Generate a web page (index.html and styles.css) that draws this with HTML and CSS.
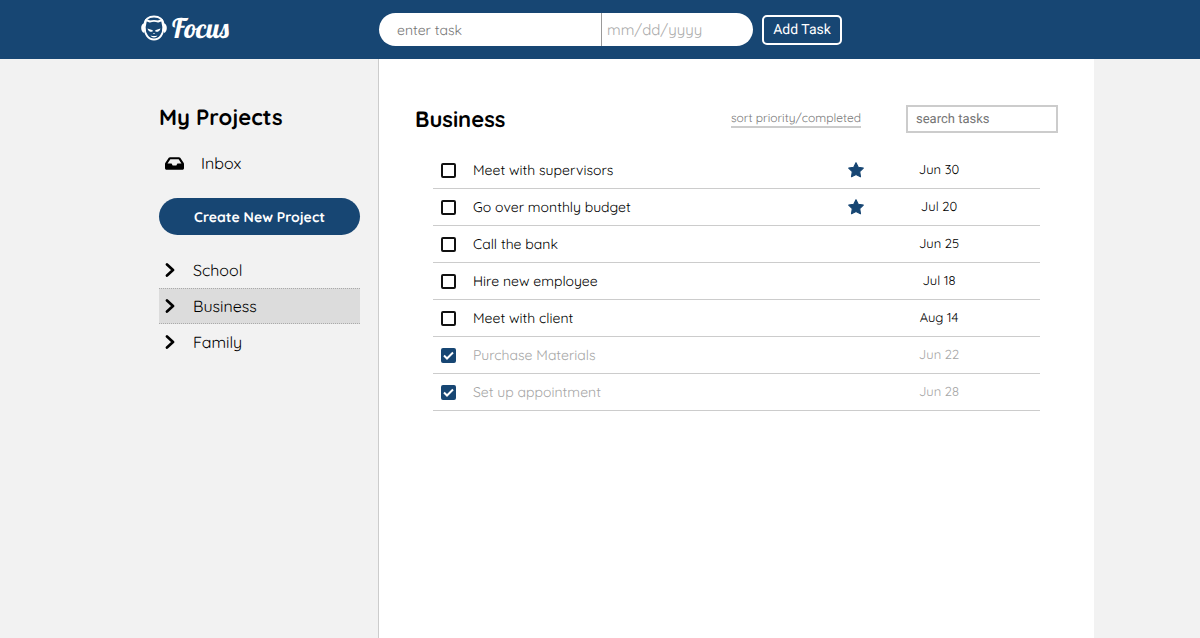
FILE: index.html
```html
<!DOCTYPE html>
<html lang="en">
<head>
<meta charset="utf-8">
<meta name="viewport" content="width=device-width, initial-scale=1">
<title>Focus</title>
<link rel="stylesheet" href="styles.css">
</head>
<body>
<header class="topbar">
  <div class="brand">
    <svg class="brand-icon" viewBox="0 0 26 26" aria-hidden="true">
      <path d="M3.500 10C3.500 4 8 1.500 13 1.500S22.500 4 22.500 10" fill="none" stroke="#fff" stroke-width="1.800"/>
      <path d="M3 8.200C.8 9 .2 11 .2 13s.8 4.200 3 5zM23 8.200c2.200.8 2.800 2.800 2.800 4.800s-.8 4.200-2.800 5z" fill="#fff"/>
      <path d="M5 5l3.800 1.500q4.200-1.300 8.400 0L21 5l1.300 7c.3 7-3.500 12.500-9.300 12.500S3.400 19 3.700 12z" fill="#174673" stroke="#fff" stroke-width="1.900" stroke-linejoin="round"/>
      <path d="M6.500 13.400l5.300 1.900-.4 1.500c-2.600.3-4.300-1-4.900-3.400zM19.500 13.400l-5.300 1.900.4 1.500c2.600.3 4.300-1 4.900-3.400zM11.800 18h2.400L13 19zM9.500 20.500q3.500 1 7 0-1 1.900-3.500 1.900t-3.500-1.900z" fill="#fff"/>
    </svg>
    <span class="brand-name">Focus</span>
  </div>
  <form class="add-form">
    <input class="task-input" type="text" placeholder="enter task" aria-label="Task">
    <input class="date-input" type="text" placeholder="mm/dd/yyyy" aria-label="Due date">
    <button class="add-button" type="button">Add Task</button>
  </form>
</header>
<div class="layout">
  <nav class="sidebar">
    <h2 class="heading">My Projects</h2>
    <a class="inbox" href="#inbox">
      <svg class="inbox-icon" viewBox="0 0 576 512" aria-hidden="true"><path d="M567.938 243.908L462.250 85.374A48.003 48.003 0 0 0 422.311 64H153.689a48 48 0 0 0-39.938 21.374L8.062 243.908A47.994 47.994 0 0 0 0 270.533V400c0 26.510 21.490 48 48 48h480c26.510 0 48-21.490 48-48V270.533a47.994 47.994 0 0 0-8.062-26.625zM162.252 128h251.497l85.333 128H376l-32 64H232l-32-64H76.918l85.334-128z"/></svg>
      Inbox
    </a>
    <button class="create-button" type="button">Create New Project</button>
    <ul class="projects">
      <li><a class="project" href="#school"><svg class="chevron" viewBox="0 0 10 14" aria-hidden="true"><path d="M2 1.500L8 7l-6 5.500"/></svg>School</a></li>
      <li><a class="project selected" href="#business"><svg class="chevron" viewBox="0 0 10 14" aria-hidden="true"><path d="M2 1.500L8 7l-6 5.500"/></svg>Business</a></li>
      <li><a class="project" href="#family"><svg class="chevron" viewBox="0 0 10 14" aria-hidden="true"><path d="M2 1.500L8 7l-6 5.500"/></svg>Family</a></li>
    </ul>
  </nav>
  <main class="content">
    <div class="toolbar">
      <h2 class="heading">Business</h2>
      <button class="sort" type="button">sort priority/completed</button>
      <input class="search" type="text" placeholder="search tasks" aria-label="Search tasks">
    </div>
    <ul class="tasks">
      <li class="task"><input class="check" type="checkbox" id="t1"><label for="t1">Meet with supervisors</label><svg class="star" viewBox="0 0 16 16" role="img" aria-label="Priority"><path d="M8 1.500l2 4.100 4.500.7-3.200 3.200.7 4.500-4-2.100L4 14l.7-4.500-3.200-3.200 4.500-.7z"/></svg><time>Jun 30</time></li>
      <li class="task"><input class="check" type="checkbox" id="t2"><label for="t2">Go over monthly budget</label><svg class="star" viewBox="0 0 16 16" role="img" aria-label="Priority"><path d="M8 1.500l2 4.100 4.500.7-3.200 3.200.7 4.500-4-2.100L4 14l.7-4.500-3.200-3.200 4.500-.7z"/></svg><time>Jul 20</time></li>
      <li class="task"><input class="check" type="checkbox" id="t3"><label for="t3">Call the bank</label><time>Jun 25</time></li>
      <li class="task"><input class="check" type="checkbox" id="t4"><label for="t4">Hire new employee</label><time>Jul 18</time></li>
      <li class="task"><input class="check" type="checkbox" id="t5"><label for="t5">Meet with client</label><time>Aug 14</time></li>
      <li class="task done"><span class="tick"><input class="check" type="checkbox" id="t6" checked><svg viewBox="0 0 15 15" aria-hidden="true"><path d="M3 7.500l3 3 6-6"/></svg></span><label for="t6">Purchase Materials</label><time>Jun 22</time></li>
      <li class="task done"><span class="tick"><input class="check" type="checkbox" id="t7" checked><svg viewBox="0 0 15 15" aria-hidden="true"><path d="M3 7.500l3 3 6-6"/></svg></span><label for="t7">Set up appointment</label><time>Jun 28</time></li>
    </ul>
  </main>
</div>
</body>
</html>
```
FILE: styles.css
```css
:root {
  --navy: #174673;
  --side: 379px;
}

* { box-sizing: border-box; }

body {
  margin: 0;
  min-height: 100vh;
  display: flex;
  flex-direction: column;
  background: #f2f2f2;
  color: #000;
  font-family: Quicksand, Lato, sans-serif;
  font-size: 16px;
  text-rendering: geometricPrecision;
}

input, button { font-family: inherit; margin: 0; text-rendering: inherit; }
button { cursor: pointer; }
a { color: inherit; text-decoration: none; }
ul { list-style: none; margin: 0; padding: 0; }

.topbar {
  display: grid;
  grid-template-columns: var(--side) 1fr;
  align-items: center;
  padding: 13px 0;
  background: var(--navy);
  color: #fff;
}

.brand {
  display: flex;
  align-items: center;
  gap: 5px;
  padding: 0 0 3px 141px;
}
.brand-icon { width: 26px; height: 26px; }
.brand-name {
  font: 27px/28px Lobster, "Liberation Serif", serif;
}

.add-form { display: flex; align-items: center; }
.task-input, .date-input {
  height: 33px;
  border: 0;
  background: #fff;
}
.task-input {
  width: 223px;
  padding: 0 18px;
  border-right: 1px solid #999;
  border-radius: 17px 0 0 17px;
  font-size: 14px;
}
.date-input {
  width: 151px;
  margin-right: 9px;
  padding: 0 5px;
  border-radius: 0 17px 17px 0;
  font-size: 15px;
}
.task-input::placeholder { color: #757575; }
.date-input::placeholder { color: #aaa; }
.add-button {
  width: 80px;
  height: 30px;
  padding: 0;
  border: 2px solid #fff;
  border-radius: 5px;
  background: transparent;
  color: #fff;
  font-family: Roboto, sans-serif;
  font-size: 14px;
}

.layout {
  flex: 1;
  display: grid;
  grid-template-columns: var(--side) minmax(0, 1fr);
  padding-right: 106px;
}

.sidebar {
  padding: 44px 18px 0 159px;
  border-right: 1px solid #ccc;
}
.heading {
  margin: 0;
  font-size: 22px;
  line-height: 28px;
  font-weight: bold;
}
.inbox {
  display: flex;
  align-items: center;
  gap: 17px;
  margin: 20px 0 23px;
  padding-left: 6px;
  font-size: 16px;
  line-height: 24px;
}
.inbox-icon { width: 19px; height: 17px; }
.create-button {
  width: 100%;
  height: 37px;
  border: 0;
  border-radius: 19px;
  background: var(--navy);
  color: #fff;
  font-size: 14px;
  font-weight: bold;
}
.projects { margin-top: 17px; }
.project {
  display: flex;
  align-items: center;
  gap: 18px;
  height: 36px;
  padding-left: 6px;
  border: 1px dotted transparent;
  border-width: 1px 0;
  font-size: 16px;
}
.project.selected { background: #dcdcdc; border-color: #aaa; }
.chevron {
  width: 10px;
  height: 14px;
  fill: none;
  stroke: #000;
  stroke-width: 2.700;
  stroke-linecap: round;
  stroke-linejoin: round;
}

.content { padding: 46px 36px 0; background: #fff; }
.toolbar { display: flex; align-items: center; }
.sort {
  margin: 0 45px 0 auto;
  padding: 0;
  border: 0;
  border-bottom: 2px solid #ccc;
  background: none;
  color: #777;
  font-size: 12px;
  line-height: 16px;
}
.search {
  width: 152px;
  height: 28px;
  padding: 0 8px;
  border: 2px solid #ccc;
  font-family: Roboto, sans-serif;
  font-size: 13px;
}
.search::placeholder { color: #757575; }

.tasks { margin: 19px 18px 0; }
.task {
  display: grid;
  grid-template-columns: 15px 1fr 44px 122px;
  align-items: center;
  height: 37px;
  padding: 0 40px 0 8px;
  border-bottom: 1px solid #ccc;
  font-size: 14px;
}
.task label { padding-left: 17px; }
.task time { grid-column: 4; text-align: center; font-size: 13px; }
.check {
  appearance: none;
  display: block;
  width: 15px;
  height: 15px;
  margin: 0;
  border: 2px solid #111;
  border-radius: 2px;
}
.tick { display: grid; }
.tick > * { grid-area: 1 / 1; }
.tick svg {
  width: 15px;
  height: 15px;
  fill: none;
  stroke: #fff;
  stroke-width: 2;
  pointer-events: none;
}
.check:checked { background: var(--navy); border-color: var(--navy); }
.star {
  width: 18px;
  height: 18px;
  justify-self: center;
  fill: var(--navy);
  stroke: var(--navy);
  stroke-linejoin: round;
}
.done { color: #a6a6a6; }
```
